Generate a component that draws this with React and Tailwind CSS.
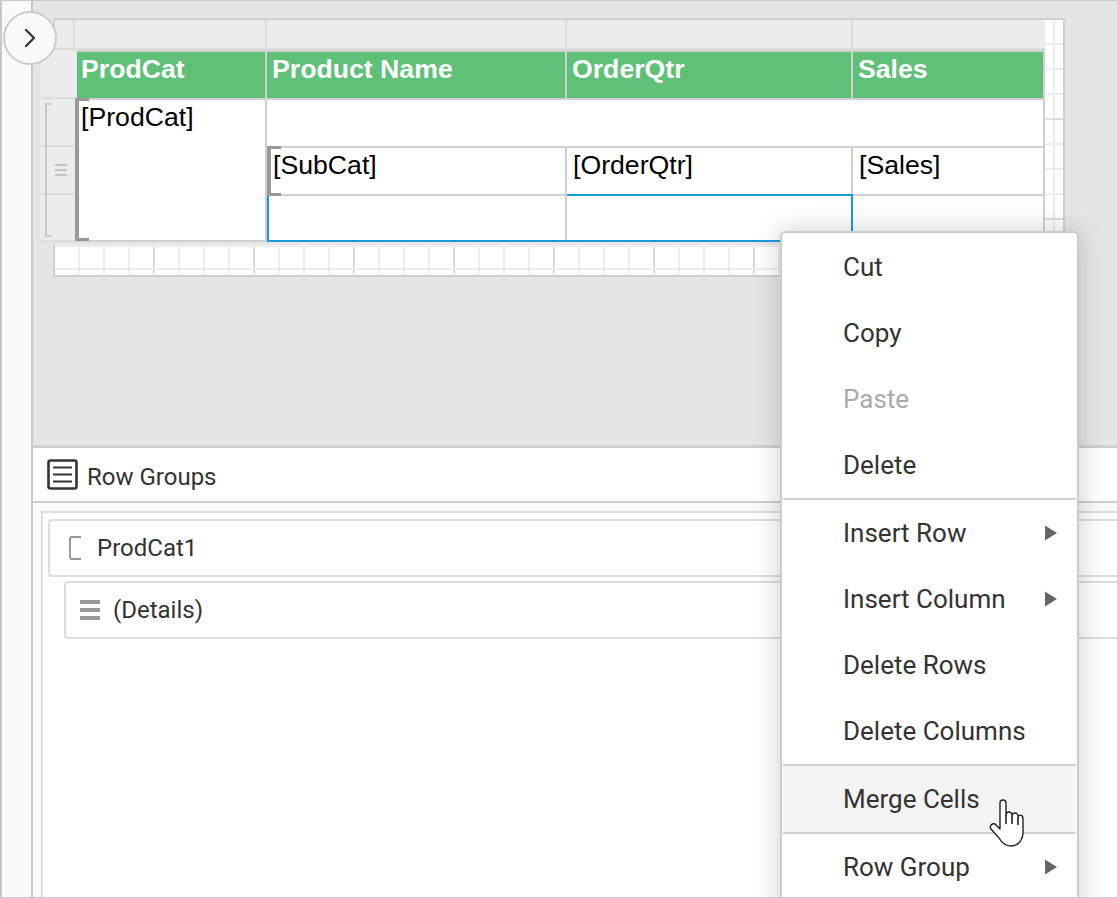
import React from 'react';
import { ChevronRight } from 'lucide-react';

const arial = "font-['Liberation_Sans',sans-serif]";

const headers = ['ProdCat', 'Product Name', 'OrderQtr', 'Sales'];
const stripCols = ['w-[20px]', 'w-[192px]', 'w-[300px]', 'w-[286px]', 'w-[192px]'];

const menuGroups = [
  [{ label: 'Cut' }, { label: 'Copy' }, { label: 'Paste', disabled: true }, { label: 'Delete' }],
  [
    { label: 'Insert Row', sub: true },
    { label: 'Insert Column', sub: true },
    { label: 'Delete Rows' },
    { label: 'Delete Columns' },
  ],
  [{ label: 'Merge Cells', hover: true }],
  [{ label: 'Row Group', sub: true }],
];

const Bracket = ({ className }) => (
  <div className={`absolute left-0 -top-[2px] w-[14px] border-l-4 border-[#999] ${className}`}>
    <div className="absolute -left-[4px] top-0 w-[14px] h-[3px] bg-[#999]" />
    <div className="absolute -left-[4px] bottom-0 w-[14px] h-[3px] bg-[#999]" />
  </div>
);

const TopStrip = () => (
  <div className="ml-[15px] flex h-[32px] w-[992px] border-t-2 border-l-2 border-[#cfcfcf] bg-[#ececec]">
    {stripCols.map((w, i) => (
      <div key={i} className={`${w} border-r-2 border-b-2 border-[#dcdcdc] last:border-r-0`} />
    ))}
  </div>
);

const RowHeader = () => (
  <div className="relative w-[37px] h-[192px] shrink-0 flex flex-col bg-[#ececec] border-l-2 border-[#e2e2e2]">
    <div className="h-[49px] border-b-2 border-[#dcdcdc]" />
    <div className="h-[48px] border-b-2 border-[#dcdcdc]" />
    <div className="h-[48px] border-b-2 border-[#dcdcdc] flex items-center justify-end pr-[8px]">
      <div className="w-[12px] flex flex-col gap-[3px]">
        <div className="h-[2px] bg-[#c4c4c4]" />
        <div className="h-[2px] bg-[#c4c4c4]" />
        <div className="h-[2px] bg-[#c4c4c4]" />
      </div>
    </div>
    <div className="h-[47px] border-b-2 border-[#dcdcdc]" />
    <div className="absolute left-[5px] top-[53px] h-[134px] w-[6px] border-2 border-r-0 border-[#c8c8c8]" />
  </div>
);

const ReportTable = () => (
  <div className={`grid grid-cols-[192px_300px_286px_192px] grid-rows-[50px_48px_48px_46px] w-[970px] h-[192px] bg-white text-[26.67px] leading-[34px] text-black ${arial}`}>
    {headers.map((h) => (
      <div key={h} className="bg-[#5fc078] border-y-2 border-r-2 border-[#d0d0d0] pl-[5px] font-bold text-white first:pl-[4px] first:border-l-2 first:border-l-[#ececec]">
        {h}
      </div>
    ))}
    <div className="relative row-span-3 border-r-2 border-b-2 border-[#d0d0d0] pl-[6px]">
      [ProdCat]
      <Bracket className="-bottom-[1px]" />
    </div>
    <div className="col-span-3 border-r-2 border-b-2 border-[#d0d0d0]" />
    <div className="relative border-r-2 border-b-2 border-[#d0d0d0] pl-[6px]">
      [SubCat]
      <Bracket className="-bottom-[2px]" />
    </div>
    <div className="border-r-2 border-b-2 border-[#d0d0d0] pl-[6px]">[OrderQtr]</div>
    <div className="border-r-2 border-b-2 border-[#d0d0d0] pl-[6px]">[Sales]</div>
    <div className="col-span-2 -mt-[2px] flex border-2 border-[#1a9ad6]">
      <div className="w-[298px] border-r-2 border-[#d0d0d0]" />
    </div>
    <div className="border-r-2 border-b-2 border-[#d0d0d0]" />
  </div>
);

const RightRuler = () => (
  <div className="relative w-[20px] h-[225px] shrink-0 -mt-[32px] border-t-2 border-r-2 border-[#cfcfcf] bg-white overflow-hidden">
    <div className="absolute top-0 bottom-0 left-[8px] w-[2px] bg-[#ececec]" />
    {[...Array(9).keys()].map((i) => (
      <div key={i} className={`relative h-[25px] border-b-2 ${i % 4 === 3 ? 'border-[#dcdcdc]' : 'border-[#ececec]'}`} />
    ))}
  </div>
);

const BottomRuler = () => (
  <div className="relative ml-[15px] mt-px w-[1012px] h-[33px] border-b-2 border-x-2 border-[#cfcfcf] bg-white overflow-hidden">
    <div className="h-[3px] bg-[#ececec]" />
    <div className="flex h-[27px]">
      {[...Array(40).keys()].map((i) => (
        <div key={i} className={`w-[25px] shrink-0 border-r-2 ${i % 4 === 3 ? 'border-[#d8d8d8]' : 'border-[#ececec]'}`} />
      ))}
    </div>
    <div className="absolute left-0 right-0 top-[24px] h-[2px] bg-[#ececec]" />
  </div>
);

const DesignArea = () => (
  <div className="h-[447px] shrink-0 border-b-[3px] border-[#cfcfcf] bg-[#e5e5e5] pt-[17px] pl-[5px]">
    <TopStrip />
    <div className="flex">
      <RowHeader />
      <ReportTable />
      <RightRuler />
    </div>
    <BottomRuler />
  </div>
);

const GroupRow = ({ icon, label, className }) => (
  <div className={`flex items-center h-[58px] w-[1100px] rounded-l-[4px] border-2 border-r-0 border-[#dddddd] bg-white text-[24px] text-[#333] ${className}`}>
    {icon}
    {label}
  </div>
);

const RowGroups = () => (
  <div className="flex-1 flex flex-col font-['Roboto',sans-serif]">
    <div className="h-[55px] shrink-0 flex items-center pl-[14px] gap-[10px] border-b-2 border-[#cfcfcf] bg-white text-[24px] text-[#333]">
      <svg width="31" height="31" viewBox="0 0 31 31" fill="none" stroke="#333" strokeWidth="2.6">
        <rect x="1.5" y="1.5" width="28" height="28" rx="2" />
        <path d="M6 8.5h19M6 15.5h19M6 22.5h19" strokeWidth="2" />
      </svg>
      <span className="mt-[4px] -ml-px">Row Groups</span>
    </div>
    <div className="flex-1 bg-[#f9f9f9] pl-[8px] pt-[8px]">
      <div className="h-full border-l-2 border-t-2 border-[#dddddd] bg-white pl-[5px] pt-[6px]">
        <GroupRow
          label="ProdCat1"
          icon={<div className="ml-[19px] mr-[16px] w-[12px] h-[24px] rounded-l-[3px] border-2 border-r-0 border-[#999]" />}
        />
        <GroupRow
          className="ml-[16px] mt-[4px]"
          label="(Details)"
          icon={
            <div className="ml-[14px] mr-[13px] w-[20px] flex flex-col gap-[4px]">
              <div className="h-[4px] bg-[#999]" />
              <div className="h-[4px] bg-[#999]" />
              <div className="h-[4px] bg-[#999]" />
            </div>
          }
        />
      </div>
    </div>
  </div>
);

const MenuItem = ({ label, disabled, sub, hover }) => (
  <div className={`h-[66px] flex items-center justify-between pl-[60px] pr-[19px] text-[26px] ${disabled ? 'text-[#aaaaaa]' : 'text-[#333]'} ${hover ? 'bg-[#f4f4f4]' : ''}`}>
    <span>{label}</span>
    {sub && (
      <svg width="12" height="16" viewBox="0 0 12 16">
        <path d="M0 0.5 12 8 0 15.5Z" fill="#666" />
      </svg>
    )}
  </div>
);

const ContextMenu = () => (
  <div className="absolute left-[778px] top-[230px] w-[299px] h-[700px] rounded-[6px] border-2 border-[#cccccc] bg-white p-px shadow-[0_0_28px_rgba(0,0,0,0.2)] font-['Roboto',sans-serif]">
    {menuGroups.map((group, i) => (
      <div key={i} className="border-b-2 border-[#cfcfcf] last:border-b-0">
        {group.map((item) => (
          <MenuItem key={item.label} {...item} />
        ))}
      </div>
    ))}
  </div>
);

const HandCursor = () => (
  <svg className="absolute left-[984px] top-[795px]" width="40" height="52" viewBox="0 0 40 52">
    <path
      d="M14 7C14 3 20 3 20 7L20 19C20.5 15 25.5 15 26 19L26 20C26.5 16 31.5 16 32 20L32 22C32.5 18 37 18 37 23L37 36C37 44 32 50 25 50C19 50 16 47 13 42L5 33C3 30 6 27 9 28L14 33Z"
      fill="#fff"
      stroke="#222"
      strokeWidth="1.4"
      strokeLinejoin="round"
    />
    <path d="M20 19V28M26 20V28M32 22V29" fill="none" stroke="#222" strokeWidth="1.6" />
  </svg>
);

export default function App() {
  return (
    <div className="relative flex w-[1117px] h-[898px] overflow-hidden border-l-2 border-y border-[#c8c8c8] bg-white">
      <div className="w-[31px] shrink-0 border-r-2 border-[#c8c8c8] bg-[#fafafa]" />
      <div className="flex-1 min-w-0 flex flex-col">
        <DesignArea />
        <RowGroups />
      </div>
      <div className="absolute left-[1px] top-[10px] w-[54px] h-[54px] rounded-full border-2 border-[#cccccc] bg-[#f9f9f9] flex items-center justify-center">
        <ChevronRight size={32} strokeWidth={1.7} color="#333" />
      </div>
      <ContextMenu />
      <HandCursor />
    </div>
  );
}
